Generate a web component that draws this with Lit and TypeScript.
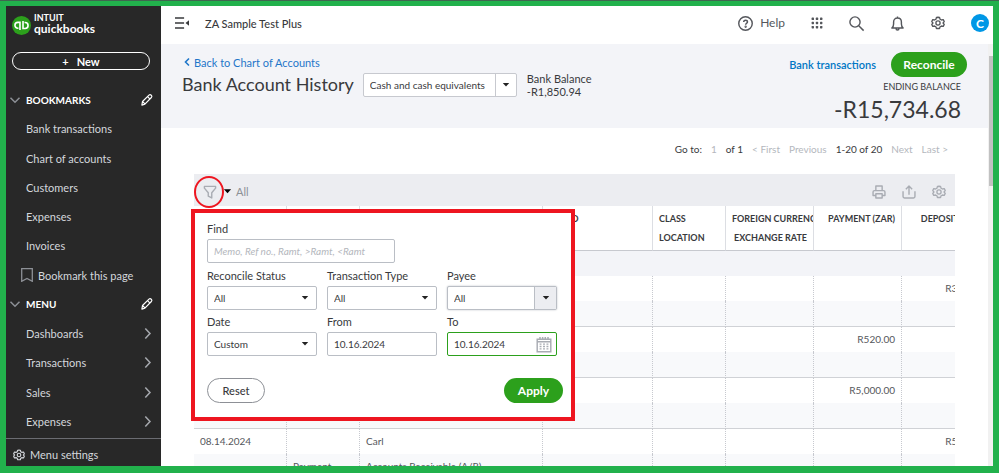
import { LitElement, html, css, svg, nothing } from "lit";
import { customElement, property, state } from "lit/decorators.js";
import { classMap } from "lit/directives/class-map.js";

const gearPath = svg`
  <path d="M10 1.800 L12.200 2.100 L13 4.600 L15 5.700 L17.500 5.100 L18.900 8 L17.200 10 L18.900 12 L17.500 14.900 L15 14.300 L13 15.400 L12.200 17.900 L7.800 17.900 L7 15.400 L5 14.300 L2.500 14.900 L1.100 12 L2.800 10 L1.100 8 L2.500 5.100 L5 5.700 L7 4.600 L7.800 2.100 Z" stroke-linejoin="round"/>
  <circle cx="10" cy="10" r="3"/>`;

const icons: Record<string, unknown> = {
  gear: gearPath,
  help: svg`<circle cx="10" cy="10" r="9"/><path d="M7.600 8.100c0-1.500 1-2.500 2.500-2.500s2.500 1 2.500 2.300c0 1.700-2.400 1.800-2.400 3.800" stroke-width="2"/><circle cx="10.200" cy="14.300" r=".6"/>`,
  grid: svg`<g fill="currentColor" stroke="none">${[3, 10, 17].map((y) =>
    [3, 10, 17].map((x) => svg`<rect x=${x - 2} y=${y - 2} width="4" height="4" rx="1"/>`)
  )}</g>`,
  search: svg`<circle cx="8" cy="8" r="6.800"/><path d="M13 13l6.500 6.500"/>`,
  bell: svg`<path d="M2.500 16h15c-1.600-1.500-2.300-3-2.300-5.500V8c0-3-2-5.300-5.200-5.300S4.800 5 4.800 8v2.500c0 2.500-.7 4-2.300 5.500zM10 .6v2M8 16.200c0 3.200 4 3.200 4 0" stroke-linejoin="round"/>`,
  pencil: svg`<path d="M1.500 18.500l1-6L13.300 1.900c1.200-1.200 2.700-.9 3.800.2s1.400 2.600.2 3.800L6.500 16.800zM11 4.500l4 4M2.500 12.500l4 4" stroke-width="2" stroke-linejoin="round"/>`,
  down: svg`<path d="M1 5.500l9 9 9-9" stroke-width="3"/>`,
  right: svg`<path d="M6 1l8.500 9L6 19" stroke-width="2.800"/>`,
  left: svg`<path d="M14 3l-7 7 7 7" stroke-width="3.200"/>`,
  bookmark: svg`<path d="M1.800 .5h16.400V19.500L10 15 1.800 19.500z" stroke-width="2" stroke-linejoin="round"/>`,
  funnel: svg`<path d="M2 2h16v2.500L12.500 11v7.500l-5-2.500v-5L2 4.500z" stroke-width="2" stroke-linejoin="round"/>`,
  printer: svg`<path d="M5.500 8V1.500h9V8M5 15H1.500V10c0-1.300.8-2 2-2h13c1.200 0 2 .7 2 2v5H15M5.500 12.500h9v6h-9z" stroke-width="2" stroke-linejoin="round"/>`,
  share: svg`<path d="M1.500 9v7.500c0 1.200.8 2 2 2h13c1.200 0 2-.8 2-2V9M10 14V2M5.500 6L10 1.500 14.500 6" stroke-width="2" stroke-linejoin="round"/>`,
  caret: svg`<path d="M2 5h16l-8 9z" fill="currentColor" stroke="none"/>`,
  calendar: svg`<path d="M1.500 3.500h17v15.500h-17zM1.500 6.500h17" stroke-width="1.800"/>
    <path d="M5 .5v4M8.300.5v4M11.600.5v4M15 .5v4" stroke-width="1.900"/>
    <path d="M4.500 9.500h11M4.500 12.500h11M4.500 15.500h11" stroke-width="1.800" stroke-dasharray="2.400 1.900"/>`,
  collapse: svg`<path d="M0 3h13M0 10h13M0 17h13" stroke-width="2.200"/><path d="M20 6v8l-5-4z" fill="currentColor" stroke="none"/>`,
};

@customElement("qb-icon")
class QbIcon extends LitElement {
  @property() name = "gear";
  static styles = css`
    :host { display: inline-block; width: 14px; height: 14px; flex: none; }
    svg { display: block; width: 100%; height: 100%; overflow: visible; }
  `;
  render() {
    return html`<svg viewBox="0 0 20 20" fill="none" stroke="currentColor" stroke-width="1.900" aria-hidden="true">${icons[this.name]}</svg>`;
  }
}

const base = css`
  * { box-sizing: border-box; }
  button, input, select { font: inherit; color: inherit; margin: 0; padding: 0; border: 0; background: none; border-radius: 0; }
  button { cursor: pointer; display: inline-flex; align-items: center; justify-content: center; }
  a { color: inherit; text-decoration: none; }
  .primary { height: 25px; border-radius: 13px; background: #2ca01c; color: #fff; font-size: 12px; font-weight: 700; }
`;

@customElement("side-nav")
class SideNav extends LitElement {
  static styles = [base, css`
    :host { display: flex; flex-direction: column; width: 155px; flex: none; background: #282828; color: #d4d7dc; font-size: 11px; }
    .logo { display: flex; align-items: center; gap: 3px; padding: 2px 6px 0; height: 37px; color: #fff; }
    .mark { width: 19px; height: 19px; flex: none; }
    .brand { display: flex; flex-direction: column; padding-bottom: 3px; font-weight: 700; }
    .intuit { font-size: 9px; line-height: 10px; }
    .qb { font-size: 12px; line-height: 12px; }
    .new { margin: 9px 11px 0 6px; height: 18px; flex: none; border: 1px solid #fff; border-radius: 9px; color: #fff; font-weight: 700; gap: 8px; }
    .list { display: flex; flex-direction: column; flex: 1; margin: 15px 0 2px; padding: 0; list-style: none; }
    .row { display: flex; align-items: center; flex: 1; padding: 0 8px 0 20px; }
    .head { padding-left: 4px; color: #fff; font-size: 10px; font-weight: 700; gap: 6px; }
    .head qb-icon { width: 10px; height: 10px; color: #8d9096; }
    .grow { flex: 1; }
    .head .edit qb-icon { width: 12px; height: 12px; color: #fff; }
    .mark-row { padding-left: 15px; }
    .mark-row a { display: flex; align-items: center; gap: 5px; }
    .mark-row svg { width: 12px; height: 14px; color: #8d9096; }
    .arrow { width: 11px; height: 11px; color: #a5a8ad; }
    .settings { display: flex; align-items: center; gap: 5px; height: 28px; padding: 4px 7px 0; border-top: 1px solid #6b6c72; }
    .settings qb-icon { width: 12px; height: 12px; }
  `];
  private head(label: string) {
    return html`<li class="row head"><qb-icon name="down"></qb-icon><span class="grow">${label}</span>
      <button class="edit" aria-label="Edit ${label.toLowerCase()}"><qb-icon name="pencil"></qb-icon></button></li>`;
  }
  private item(label: string, arrow = false) {
    return html`<li class="row"><a class="grow" href="#">${label}</a>${arrow ? html`<qb-icon class="arrow" name="right"></qb-icon>` : nothing}</li>`;
  }
  render() {
    return html`
      <div class="logo">
        <svg class="mark" viewBox="0 0 20 20" aria-hidden="true">
          <circle cx="10" cy="10" r="10" fill="#2ca01c"/>
          <g fill="none" stroke="#fff" stroke-width="1.700">
            <path d="M8.400 14.800V6.700H6.200a3.100 3.100 0 0 0 0 6.200h.6"/>
            <path d="M11.600 5.200v7.900h2.200a3.100 3.100 0 0 0 0-6.200h-.6"/>
          </g>
        </svg>
        <div class="brand"><span class="intuit">INTUIT</span><span class="qb">quickbooks</span></div>
      </div>
      <button class="new"><span>+</span><span>New</span></button>
      <ul class="list">
        ${this.head("BOOKMARKS")}
        ${["Bank transactions", "Chart of accounts", "Customers", "Expenses", "Invoices"].map((l) => this.item(l))}
        <li class="row mark-row"><a href="#">
          <svg viewBox="0 0 12 14" fill="none" stroke="currentColor" stroke-width="1.300" aria-hidden="true"><path d="M.7.7h10.600v12.600L6 10.400.7 13.300z"/></svg>
          Bookmark this page</a></li>
        ${this.head("MENU")}
        ${["Dashboards", "Transactions", "Sales", "Expenses"].map((l) => this.item(l, true))}
      </ul>
      <a class="settings" href="#"><qb-icon name="gear"></qb-icon>Menu settings</a>`;
  }
}

@customElement("top-bar")
class TopBar extends LitElement {
  static styles = [base, css`
    :host { display: flex; align-items: center; height: 38px; padding: 0 4px 4px 14px; color: #393a3d; font-size: 11px; }
    .company { flex: 1; margin-left: 16px; font-weight: 500; }
    .tools { display: flex; align-items: center; gap: 26px; color: #55575c; }
    .help { gap: 7px; font-size: 12px; line-height: 14px; }
    .help qb-icon, .search { width: 15px; height: 15px; }
    .grid { width: 12px; height: 12px; }
    .avatar { width: 18px; height: 18px; border-radius: 50%; background: #0097e6; color: #fff; font-weight: 700; font-size: 12px; }
  `];
  render() {
    return html`
      <button aria-label="Collapse menu"><qb-icon name="collapse"></qb-icon></button>
      <span class="company">ZA Sample Test Plus</span>
      <div class="tools">
        <button class="help"><qb-icon name="help"></qb-icon>Help</button>
        <button aria-label="Apps"><qb-icon class="grid" name="grid"></qb-icon></button>
        <button aria-label="Search"><qb-icon class="search" name="search"></qb-icon></button>
        <button aria-label="Notifications"><qb-icon class="search" name="bell"></qb-icon></button>
        <button aria-label="Settings"><qb-icon name="gear"></qb-icon></button>
        <button class="avatar" aria-label="Account">C</button>
      </div>`;
  }
}

@customElement("page-head")
class PageHead extends LitElement {
  static styles = [base, css`
    :host { display: flex; justify-content: space-between; height: 84px; padding: 8px 21px 0; background: #f3f4f8; color: #393a3d; font-size: 11px; }
    .back { display: flex; align-items: center; gap: 2px; height: 20px; color: #1f76c9; }
    .back qb-icon { width: 10px; height: 10px; }
    .line { display: flex; align-items: center; }
    h1 { margin: 0 9px 0 0; padding-bottom: 2px; font-size: 18px; line-height: 24px; font-weight: 400; white-space: nowrap; }
    .combo { display: flex; width: 154px; height: 24px; background: #fff; border: 1px solid #c7c9cf; border-radius: 2px; font-size: 10px; }
    .combo input { flex: 1; min-width: 0; padding-left: 6px; }
    .combo button { width: 21px; border-left: 1px solid #c7c9cf; }
    .combo qb-icon { width: 8px; height: 8px; color: #222; }
    .bank { margin-left: 10px; line-height: 13px; }
    .right { display: flex; flex-direction: column; align-items: flex-end; }
    .acts { display: flex; align-items: center; gap: 15px; }
    .acts a { color: #0077c5; font-weight: 600; }
    .primary { width: 76px; }
    .cap { margin: 4px 6px 0 0; font-size: 9px; line-height: 12px; }
    .sum { margin-right: 6px; font-size: 23px; line-height: 32px; }
  `];
  render() {
    return html`
      <div>
        <a class="back" href="#"><qb-icon name="left"></qb-icon>Back to Chart of Accounts</a>
        <div class="line">
          <h1>Bank Account History</h1>
          <div class="combo"><input aria-label="Account" .value=${"Cash and cash equivalents"}><button aria-label="Choose account"><qb-icon name="caret"></qb-icon></button></div>
          <div class="bank">Bank Balance<br>-R1,850.94</div>
        </div>
      </div>
      <div class="right">
        <div class="acts"><a href="#">Bank transactions</a><button class="primary">Reconcile</button></div>
        <div class="cap">ENDING BALANCE</div>
        <div class="sum">-R15,734.68</div>
      </div>`;
  }
}

@customElement("filter-panel")
class FilterPanel extends LitElement {
  static styles = [base, css`
    :host { display: block; width: 384px; padding: 8px 8px 14px 12px; background: #fff; border: 4px solid #ee1620; color: #393a3d; font-size: 11px; }
    .fields { display: grid; grid-template-columns: repeat(3, 110px); column-gap: 10px; }
    .find { width: 188px; margin-bottom: 3px; }
    .field { display: flex; flex-direction: column; }
    label { height: 18px; line-height: 16px; }
    .fields label { height: 20px; line-height: 20px; }
    .fields .field { padding-bottom: 2px; }
    .box { position: relative; display: flex; height: 24px; background: #fff; border: 1px solid #babec5; border-radius: 2px; font-size: 10px; }
    .box input, .box select { flex: 1; min-width: 0; width: 100%; padding: 0 6px; appearance: none; outline: none; }
    .find input { font-style: italic; }
    .find input::placeholder { color: #b4b7bd; opacity: 1; }
    .mark { position: absolute; top: 0; bottom: 0; right: 0; display: flex; align-items: center; justify-content: center; width: 22px; pointer-events: none; }
    .mark qb-icon { width: 8px; height: 8px; color: #222; }
    .split { box-shadow: 0 0 2px #babec5; }
    .split .mark { background: #ecedf1; border-left: 1px solid #babec5; }
    .active { border-color: #2ca01c; }
    .cal qb-icon { width: 16px; height: 17px; color: #a9acb3; }
    .cal { width: 24px; }
    .foot { display: flex; justify-content: space-between; margin-top: 20px; }
    .reset { width: 58px; height: 25px; border: 1px solid #8d9096; border-radius: 13px; font-weight: 500; }
    .primary { width: 59px; }
  `];
  private select(id: string, label: string, value: string, split = false) {
    return html`<div class="field"><label for=${id}>${label}</label>
      <div class=${classMap({ box: true, split })}><select id=${id}><option>${value}</option></select>
      <span class="mark"><qb-icon name="caret"></qb-icon></span></div></div>`;
  }
  render() {
    return html`
      <div class="field find"><label for="find">Find</label>
        <div class="box"><input id="find" placeholder="Memo, Ref no., Ramt, &gt;Ramt, &lt;Ramt"></div></div>
      <div class="fields">
        ${this.select("status", "Reconcile Status", "All")}
        ${this.select("type", "Transaction Type", "All")}
        ${this.select("payee", "Payee", "All", true)}
        ${this.select("date", "Date", "Custom")}
        <div class="field"><label for="from">From</label><div class="box"><input id="from" .value=${"10.16.2024"}></div></div>
        <div class="field"><label for="to">To</label><div class="box active"><input id="to" .value=${"10.16.2024"}>
          <span class="mark cal"><qb-icon name="calendar"></qb-icon></span></div></div>
      </div>
      <div class="foot"><button class="reset">Reset</button><button class="primary">Apply</button></div>`;
  }
}

interface Entry { date?: string; type?: string; payee?: string; account?: string; payment?: string; deposit?: string; }

@customElement("register-table")
class RegisterTable extends LitElement {
  @state() private entries: Entry[] = [
    { deposit: "R350.00" },
    { payment: "R520.00" },
    { payment: "R5,000.00" },
    { date: "08.14.2024", type: "Payment", payee: "Carl", account: "Accounts Receivable (A/R)", deposit: "R500.00" },
  ];
  static styles = [base, css`
    :host { display: block; position: relative; margin: 0 33px; color: #55575c; font-size: 10px; }
    .pager { display: flex; align-items: center; justify-content: flex-end; gap: 9px; height: 46px; padding: 0 7px 4px 0; color: #b4b7bd; }
    .pager .on { color: #393a3d; }
    .tools { display: flex; align-items: center; height: 32px; padding: 3px 9px 0 9px; background: #ecedf1; color: #a9acb3; }
    .filter { gap: 6px; color: #a9acb3; }
    .filter .tri { width: 9px; height: 9px; color: #000; }
    .all { flex: 1; margin-left: 4px; color: #8d9096; font-size: 11px; }
    .acts { display: flex; gap: 16px; }
    .clip { overflow: hidden; }
    table { width: 796px; table-layout: fixed; border-collapse: separate; border-spacing: 0; }
    .date { width: 93px; } .ref { width: 73px; } .payee { width: 183px; } .memo { width: 110px; } .class { width: 73px; }
    .money { width: 88px; }
    th { height: 45px; padding: 3px 6px 0; vertical-align: top; text-align: left; font-size: 9px; line-height: 19px; color: #393a3d; white-space: nowrap; overflow: hidden; border-right: 1px solid #dcdee3; border-bottom: 1px solid #c7c9cf; }
    .num { text-align: right; }
    td { height: 25px; padding: 0 6px 2px; line-height: 22px; white-space: nowrap; overflow: hidden; border-right: 1px dotted #c7c9cf; }
    .band td { background: #f3f4f8; border: 0; }
    .second td { height: 26px; background: #f8f9fb; border-bottom: 1px solid #d0d2d6; }
    filter-panel { position: absolute; left: -3px; top: 81px; }
    .ring { position: absolute; left: 0; top: 48px; width: 30px; height: 32px; border: 2px solid #ee1620; border-radius: 50%; pointer-events: none; }
  `];
  render() {
    return html`
      <div class="pager"><span class="on">Go to:</span><span>1</span><span class="on">of 1</span><span>&lt; First</span><span>Previous</span><span class="on">1-20 of 20</span><span>Next</span><span>Last &gt;</span></div>
      <div class="tools">
        <button class="filter" aria-label="Filter"><qb-icon name="funnel"></qb-icon><qb-icon class="tri" name="caret"></qb-icon></button>
        <span class="all">All</span>
        <div class="acts">
          <button aria-label="Print"><qb-icon name="printer"></qb-icon></button>
          <button aria-label="Export"><qb-icon name="share"></qb-icon></button>
          <button aria-label="Table settings"><qb-icon name="gear"></qb-icon></button>
        </div>
      </div>
      <div class="clip"><table>
        <thead><tr>
          <th class="date">DATE</th><th class="ref">REF NO.<br>TYPE</th><th class="payee">PAYEE<br>ACCOUNT</th><th class="memo">MEMO</th>
          <th class="class">CLASS<br>LOCATION</th><th class="money num">FOREIGN CURRENCY<br>EXCHANGE RATE</th>
          <th class="money num">PAYMENT (ZAR)</th><th class="money num">DEPOSIT (ZAR)</th>
        </tr></thead>
        <tbody>
          <tr class="band"><td colspan="8"></td></tr>
          ${this.entries.map((e) => html`
            <tr><td>${e.date}</td><td></td><td>${e.payee}</td><td></td><td></td><td></td><td class="num">${e.payment}</td><td class="num">${e.deposit}</td></tr>
            <tr class="second"><td></td><td>${e.type}</td><td>${e.account}</td><td></td><td></td><td></td><td></td><td></td></tr>`)}
        </tbody>
      </table></div>
      <filter-panel></filter-panel>
      <span class="ring"></span>`;
  }
}

@customElement("app-root")
class AppRoot extends LitElement {
  static styles = [base, css`
    :host { display: flex; height: 100vh; box-sizing: border-box; border-top: 1px solid #3f6650; font-family: Lato, "Liberation Sans", sans-serif; background: #22b14c; padding: 5px 6px 0; }
    .shell { display: flex; flex: 1; min-width: 0; height: calc(100% - 7px); background: #fff; overflow: hidden; }
    .main { flex: 1; min-width: 0; display: flex; flex-direction: column; }
    .body { flex: 1; min-height: 0; display: flex; overflow: hidden; }
    .content { flex: 1; min-width: 0; overflow: hidden; }
    .track { width: 5px; flex: none; padding: 12px 0 0 1px; background: #f1f1f1; }
    .thumb { height: 130px; background: #c1c1c1; }
  `];
  render() {
    return html`<div class="shell">
      <side-nav></side-nav>
      <div class="main">
        <top-bar></top-bar>
        <div class="body">
          <div class="content"><page-head></page-head><register-table></register-table></div>
          <div class="track"><div class="thumb"></div></div>
        </div>
      </div>
    </div>`;
  }
}
